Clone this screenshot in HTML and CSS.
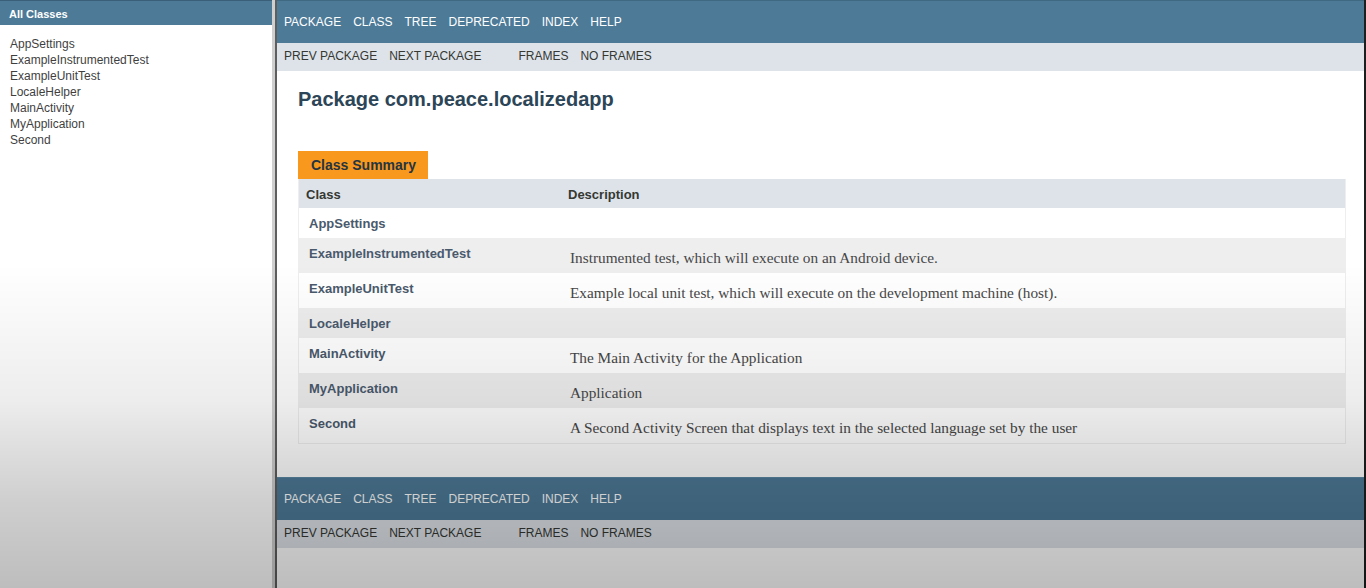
FILE: index.html
```html
<!DOCTYPE html>
<html lang="en">
<head>
<meta charset="utf-8">
<title>com.peace.localizedapp</title>
<link rel="stylesheet" href="styles.css">
</head>
<body>
<div class="frames">
  <aside class="left-frame">
    <h2 class="bar">All Classes</h2>
    <ul class="class-list">
      <li>AppSettings</li>
      <li>ExampleInstrumentedTest</li>
      <li>ExampleUnitTest</li>
      <li>LocaleHelper</li>
      <li>MainActivity</li>
      <li>MyApplication</li>
      <li>Second</li>
    </ul>
  </aside>
  <div class="divider"></div>
  <main class="right-frame">
    <nav class="top-nav">
      <span>PACKAGE</span><span>CLASS</span><span>TREE</span><span>DEPRECATED</span><span>INDEX</span><span>HELP</span>
    </nav>
    <nav class="sub-nav">
      <span>PREV PACKAGE</span><span>NEXT PACKAGE</span><span class="gap">FRAMES</span><span>NO FRAMES</span>
    </nav>
    <header class="header">
      <h1 class="title">Package com.peace.localizedapp</h1>
    </header>
    <section class="content">
      <div class="tab">Class Summary</div>
      <table class="summary">
        <thead>
          <tr><th class="col-first">Class</th><th class="col-last">Description</th></tr>
        </thead>
        <tbody>
          <tr class="alt"><td class="col-first">AppSettings</td><td class="col-last"></td></tr>
          <tr class="row"><td class="col-first">ExampleInstrumentedTest</td><td class="col-last"><div class="block">Instrumented test, which will execute on an Android device.</div></td></tr>
          <tr class="alt"><td class="col-first">ExampleUnitTest</td><td class="col-last"><div class="block">Example local unit test, which will execute on the development machine (host).</div></td></tr>
          <tr class="row"><td class="col-first">LocaleHelper</td><td class="col-last"></td></tr>
          <tr class="alt"><td class="col-first">MainActivity</td><td class="col-last"><div class="block">The Main Activity for the Application</div></td></tr>
          <tr class="row"><td class="col-first">MyApplication</td><td class="col-last"><div class="block">Application</div></td></tr>
          <tr class="alt"><td class="col-first">Second</td><td class="col-last"><div class="block">A Second Activity Screen that displays text in the selected language set by the user</div></td></tr>
        </tbody>
      </table>
    </section>
    <nav class="top-nav bottom">
      <span>PACKAGE</span><span>CLASS</span><span>TREE</span><span>DEPRECATED</span><span>INDEX</span><span>HELP</span>
    </nav>
    <nav class="sub-nav">
      <span>PREV PACKAGE</span><span>NEXT PACKAGE</span><span class="gap">FRAMES</span><span>NO FRAMES</span>
    </nav>
  </main>
  <div class="edge"></div>
</div>
<div class="vignette"></div>
</body>
</html>
```
FILE: styles.css
```css
html, body {
  margin: 0;
  padding: 0;
  height: 100%;
  overflow: hidden;
  background: #ffffff;
  font-family: "Liberation Sans", Arial, sans-serif;
  color: #353833;
}

.frames {
  display: flex;
  height: 100vh;
}

.left-frame {
  width: 272px;
  flex: none;
  background: #ffffff;
  border-top: 1px solid #3a5f78;
}

.bar {
  margin: 0;
  height: 24px;
  background: #4d7a97;
  color: #ffffff;
  font-size: 11px;
  font-weight: bold;
  line-height: 24px;
  padding-left: 9px;
  padding-top: 1px;
  box-sizing: border-box;
}

.class-list {
  list-style: none;
  margin: 0;
  padding: 11px 0 0 10px;
}

.class-list li {
  font-size: 12px;
  line-height: 16px;
  color: #3f3f3f;
}

.divider {
  flex: none;
  width: 3px;
  background: #cfcfcf;
  border-right: 2px solid #5e5e5e;
}

.right-frame {
  flex: 1;
  min-width: 0;
  background: #ffffff;
}

.edge {
  flex: none;
  width: 2px;
  background: #1e1e1e;
}

.top-nav {
  display: flex;
  gap: 12px;
  height: 43px;
  box-sizing: border-box;
  background: #4d7a97;
  border-top: 1px solid #3f6883;
  align-items: center;
  padding: 0 0 1px 7px;
  font-size: 12px;
  color: #ffffff;
}

.top-nav.bottom {
  margin-top: 33px;
  height: 43px;
  border-top: 1px solid #5a87a4;
}

.sub-nav {
  display: flex;
  gap: 12px;
  height: 28px;
  box-sizing: border-box;
  background: #dee3e9;
  align-items: center;
  padding: 0 0 3px 7px;
  font-size: 12px;
  color: #353833;
}

.sub-nav .gap {
  margin-left: 25px;
}

.header {
  padding: 16px 0 0 21px;
}

.title {
  margin: 0;
  font-size: 20px;
  line-height: 24px;
  font-weight: bold;
  color: #2c4557;
}

.content {
  padding: 40px 18px 0 21px;
}

.tab {
  display: inline-block;
  height: 28px;
  line-height: 28px;
  background: #f8981d;
  color: #253441;
  font-size: 14px;
  font-weight: bold;
  padding: 0 12px 0 13px;
  vertical-align: top;
}

.summary {
  width: 100%;
  border-collapse: collapse;
  border: 1px solid #eeeeef;
  border-top: none;
}

.summary th {
  background: #dee3e9;
  text-align: left;
  font-size: 13px;
  line-height: 16px;
  font-weight: bold;
  color: #353833;
  padding: 8px 3px 5px 7px;
}

.summary th.col-first {
  width: 252px;
}

.summary td {
  vertical-align: top;
  padding: 8px 3px 5px 10px;
}

.summary td.col-first {
  padding-bottom: 6px;
  font-size: 13px;
  line-height: 16px;
  font-weight: bold;
  color: #4a5a6d;
}

.summary tr.alt {
  background: #ffffff;
}

.summary tr.row {
  background: #eeeeef;
}

.block {
  margin: 2px 0 1px -1px;
  font-family: "Liberation Serif", "Times New Roman", serif;
  font-size: 15.3px;
  line-height: 19px;
  color: #474747;
}

.vignette {
  position: fixed;
  inset: 0;
  pointer-events: none;
  background: linear-gradient(to bottom,
    rgba(0, 0, 0, 0) 0%,
    rgba(0, 0, 0, 0) 45%,
    rgba(0, 0, 0, 0.07) 68%,
    rgba(0, 0, 0, 0.19) 85%,
    rgba(0, 0, 0, 0.26) 100%);
}
```
